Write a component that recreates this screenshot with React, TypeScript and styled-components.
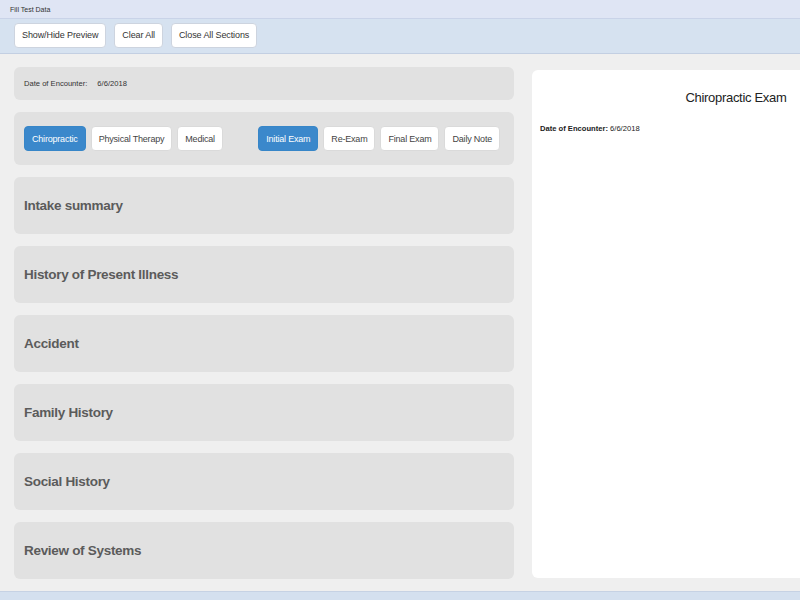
import React from "react";
import styled, { createGlobalStyle } from "styled-components";

const Global = createGlobalStyle`
  html, body { margin: 0; padding: 0; }
  body {
    width: 800px;
    height: 600px;
    overflow: hidden;
    font-family: "Liberation Sans", Arial, Helvetica, sans-serif;
    background: #efefef;
  }
`;

const Page = styled.div`
  width: 800px;
  height: 600px;
  display: flex;
  flex-direction: column;
  overflow: hidden;
`;

const TitleBar = styled.div`
  height: 18px;
  flex: none;
  background: #dfe5f4;
  border-bottom: 1px solid #c9d3e8;
  display: flex;
  align-items: center;
  padding-left: 10px;
  font-size: 7px;
  color: #333;
`;

const Toolbar = styled.div`
  height: 35px;
  flex: none;
  box-sizing: border-box;
  background: #d6e2f0;
  border-bottom: 1px solid #c3cfe2;
  display: flex;
  align-items: center;
  gap: 8px;
  padding: 0 14px 2px;
`;

const ToolButton = styled.button`
  height: 25px;
  padding: 0 7px;
  background: #fff;
  border: 1px solid #cdd4df;
  border-radius: 4px;
  font-family: inherit;
  font-size: 9px;
  letter-spacing: -0.1px;
  color: #333;
  white-space: nowrap;
  cursor: pointer;
`;

const Main = styled.div`
  flex: 1;
  display: flex;
  gap: 18px;
  padding: 13px 0 0 14px;
  background: #efefef;
  border-left: 5px solid #f7f7f7;
  margin-left: -5px;
  overflow: hidden;
`;

const LeftColumn = styled.div`
  width: 500px;
  flex: none;
  display: flex;
  flex-direction: column;
  gap: 12px;
`;

const Card = styled.div`
  background: #e1e1e1;
  border-radius: 6px;
  box-sizing: border-box;
`;

const DateBox = styled(Card)`
  height: 33px;
  display: flex;
  align-items: center;
  gap: 10px;
  padding-left: 10px;
  font-size: 7.6px;
  color: #333;
`;

const TabsBox = styled(Card)`
  height: 53px;
  display: flex;
  align-items: center;
  padding: 0 14px 0 10px;
`;

const TabGroup = styled.div<{ $push?: boolean }>`
  display: flex;
  gap: 5px;
  margin-left: ${(p) => (p.$push ? "auto" : "0")};
`;

const Tab = styled.button<{ $active?: boolean }>`
  height: 25px;
  flex: none;
  padding: 0 7px;
  border-radius: 4px;
  border: 1px solid ${(p) => (p.$active ? "#3786c8" : "#dadada")};
  background: ${(p) => (p.$active ? "#3b88cb" : "#ffffff")};
  color: ${(p) => (p.$active ? "#ffffff" : "#444")};
  font-family: inherit;
  font-size: 9px;
  letter-spacing: -0.2px;
  white-space: nowrap;
  cursor: pointer;
`;

const Section = styled(Card)`
  height: 57px;
  display: flex;
  align-items: center;
  padding-left: 10px;
  font-size: 13.5px;
  font-weight: bold;
  letter-spacing: -0.3px;
  color: #5b5b5b;
`;

const Preview = styled.div`
  margin-top: 3px;
  width: 408px;
  height: 508px;
  flex: none;
  background: #fff;
  border-radius: 6px;
  box-sizing: border-box;
  padding: 20px 8px 0;
`;

const PreviewTitle = styled.div`
  text-align: center;
  font-size: 13px;
  letter-spacing: -0.3px;
  color: #222;
  margin-bottom: 19px;
`;

const PreviewLine = styled.div`
  font-size: 7.6px;
  color: #222;
  b { font-weight: bold; }
`;

const BottomBar = styled.div`
  height: 8px;
  flex: none;
  background: #d4e0ef;
  border-top: 1px solid #c6d2e4;
`;

const sections = [
  "Intake summary",
  "History of Present Illness",
  "Accident",
  "Family History",
  "Social History",
  "Review of Systems",
];

export default function App() {
  return (
    <>
      <Global />
      <Page>
        <TitleBar>Fill Test Data</TitleBar>
        <Toolbar>
          <ToolButton>Show/Hide Preview</ToolButton>
          <ToolButton>Clear All</ToolButton>
          <ToolButton>Close All Sections</ToolButton>
        </Toolbar>
        <Main>
          <LeftColumn>
            <DateBox>
              <span>Date of Encounter:</span>
              <span>6/6/2018</span>
            </DateBox>
            <TabsBox>
              <TabGroup>
                <Tab $active>Chiropractic</Tab>
                <Tab>Physical Therapy</Tab>
                <Tab>Medical</Tab>
              </TabGroup>
              <TabGroup $push>
                <Tab $active>Initial Exam</Tab>
                <Tab>Re-Exam</Tab>
                <Tab>Final Exam</Tab>
                <Tab>Daily Note</Tab>
              </TabGroup>
            </TabsBox>
            {sections.map((s) => (
              <Section key={s}>{s}</Section>
            ))}
          </LeftColumn>
          <Preview>
            <PreviewTitle>Chiropractic Exam</PreviewTitle>
            <PreviewLine>
              <b>Date of Encounter:</b> 6/6/2018
            </PreviewLine>
          </Preview>
        </Main>
        <BottomBar />
      </Page>
    </>
  );
}
